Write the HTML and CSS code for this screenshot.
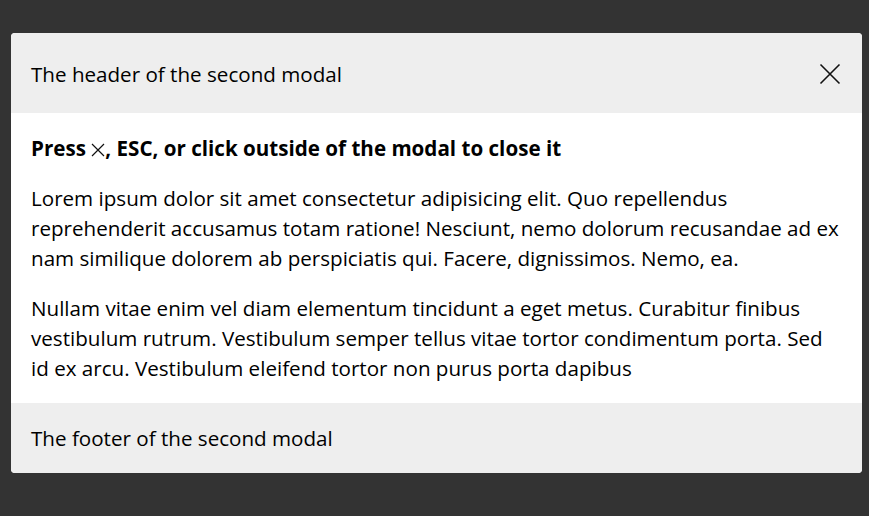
FILE: index.html
```html
<!DOCTYPE html>
<html lang="en">
<head>
<meta charset="utf-8">
<title>Modal</title>
<link rel="stylesheet" href="styles.css">
</head>
<body>
<div class="modal">
  <header class="modal-header">
    <span class="modal-title">The header of the second modal</span>
    <button class="close-btn" aria-label="Close">
      <svg width="22" height="22" viewBox="0 0 22 22"><path d="M1.5 1.5L20.5 20.5M20.5 1.5L1.5 20.5" stroke="#111" stroke-width="1.6" fill="none"/></svg>
    </button>
  </header>
  <div class="modal-body">
    <p class="lead">Press <svg class="inline-x" width="14" height="14" viewBox="0 0 14 14"><path d="M1 1L13 13M13 1L1 13" stroke="#111" stroke-width="1.2" fill="none"/></svg>, ESC, or click outside of the modal to close it</p>
    <p>Lorem ipsum dolor sit amet consectetur adipisicing elit. Quo repellendus reprehenderit accusamus totam ratione! Nesciunt, nemo dolorum recusandae ad ex nam similique dolorem ab perspiciatis qui. Facere, dignissimos. Nemo, ea.</p>
    <p>Nullam vitae enim vel diam elementum tincidunt a eget metus. Curabitur finibus vestibulum rutrum. Vestibulum semper tellus vitae tortor condimentum porta. Sed id ex arcu. Vestibulum eleifend tortor non purus porta dapibus</p>
  </div>
  <footer class="modal-footer">The footer of the second modal</footer>
</div>
</body>
</html>
```
FILE: styles.css
```css
html, body {
  margin: 0;
  padding: 0;
  background: #333333;
  height: 100%;
}
body {
  font-family: "Open Sans", "Noto Sans", sans-serif;
  font-size: 20.6px;
  line-height: 30px;
  color: #000;
  padding: 33px 7px 0 11px;
  box-sizing: border-box;
}
.modal {
  width: 851px;
  background: #fff;
  border-radius: 4px;
  overflow: hidden;
}
.modal-header {
  display: flex;
  align-items: center;
  justify-content: space-between;
  background: #eeeeee;
  height: 80px;
  padding: 0 20px;
  box-sizing: border-box;
}
.modal-title {
  padding-top: 2px;
}
.close-btn {
  background: none;
  border: 0;
  padding: 0;
  width: 22px;
  height: 22px;
  margin-right: 1px;
  margin-top: 1px;
  display: flex;
}
.modal-body {
  padding: 20px;
}
.modal-body p {
  margin: 0 0 20px;
}
.modal-body p:last-child {
  margin-bottom: 0;
}
.lead {
  font-weight: 700;
}
.inline-x {
  vertical-align: -1px;
}
.modal-footer {
  background: #eeeeee;
  padding: 20px;
}
```
